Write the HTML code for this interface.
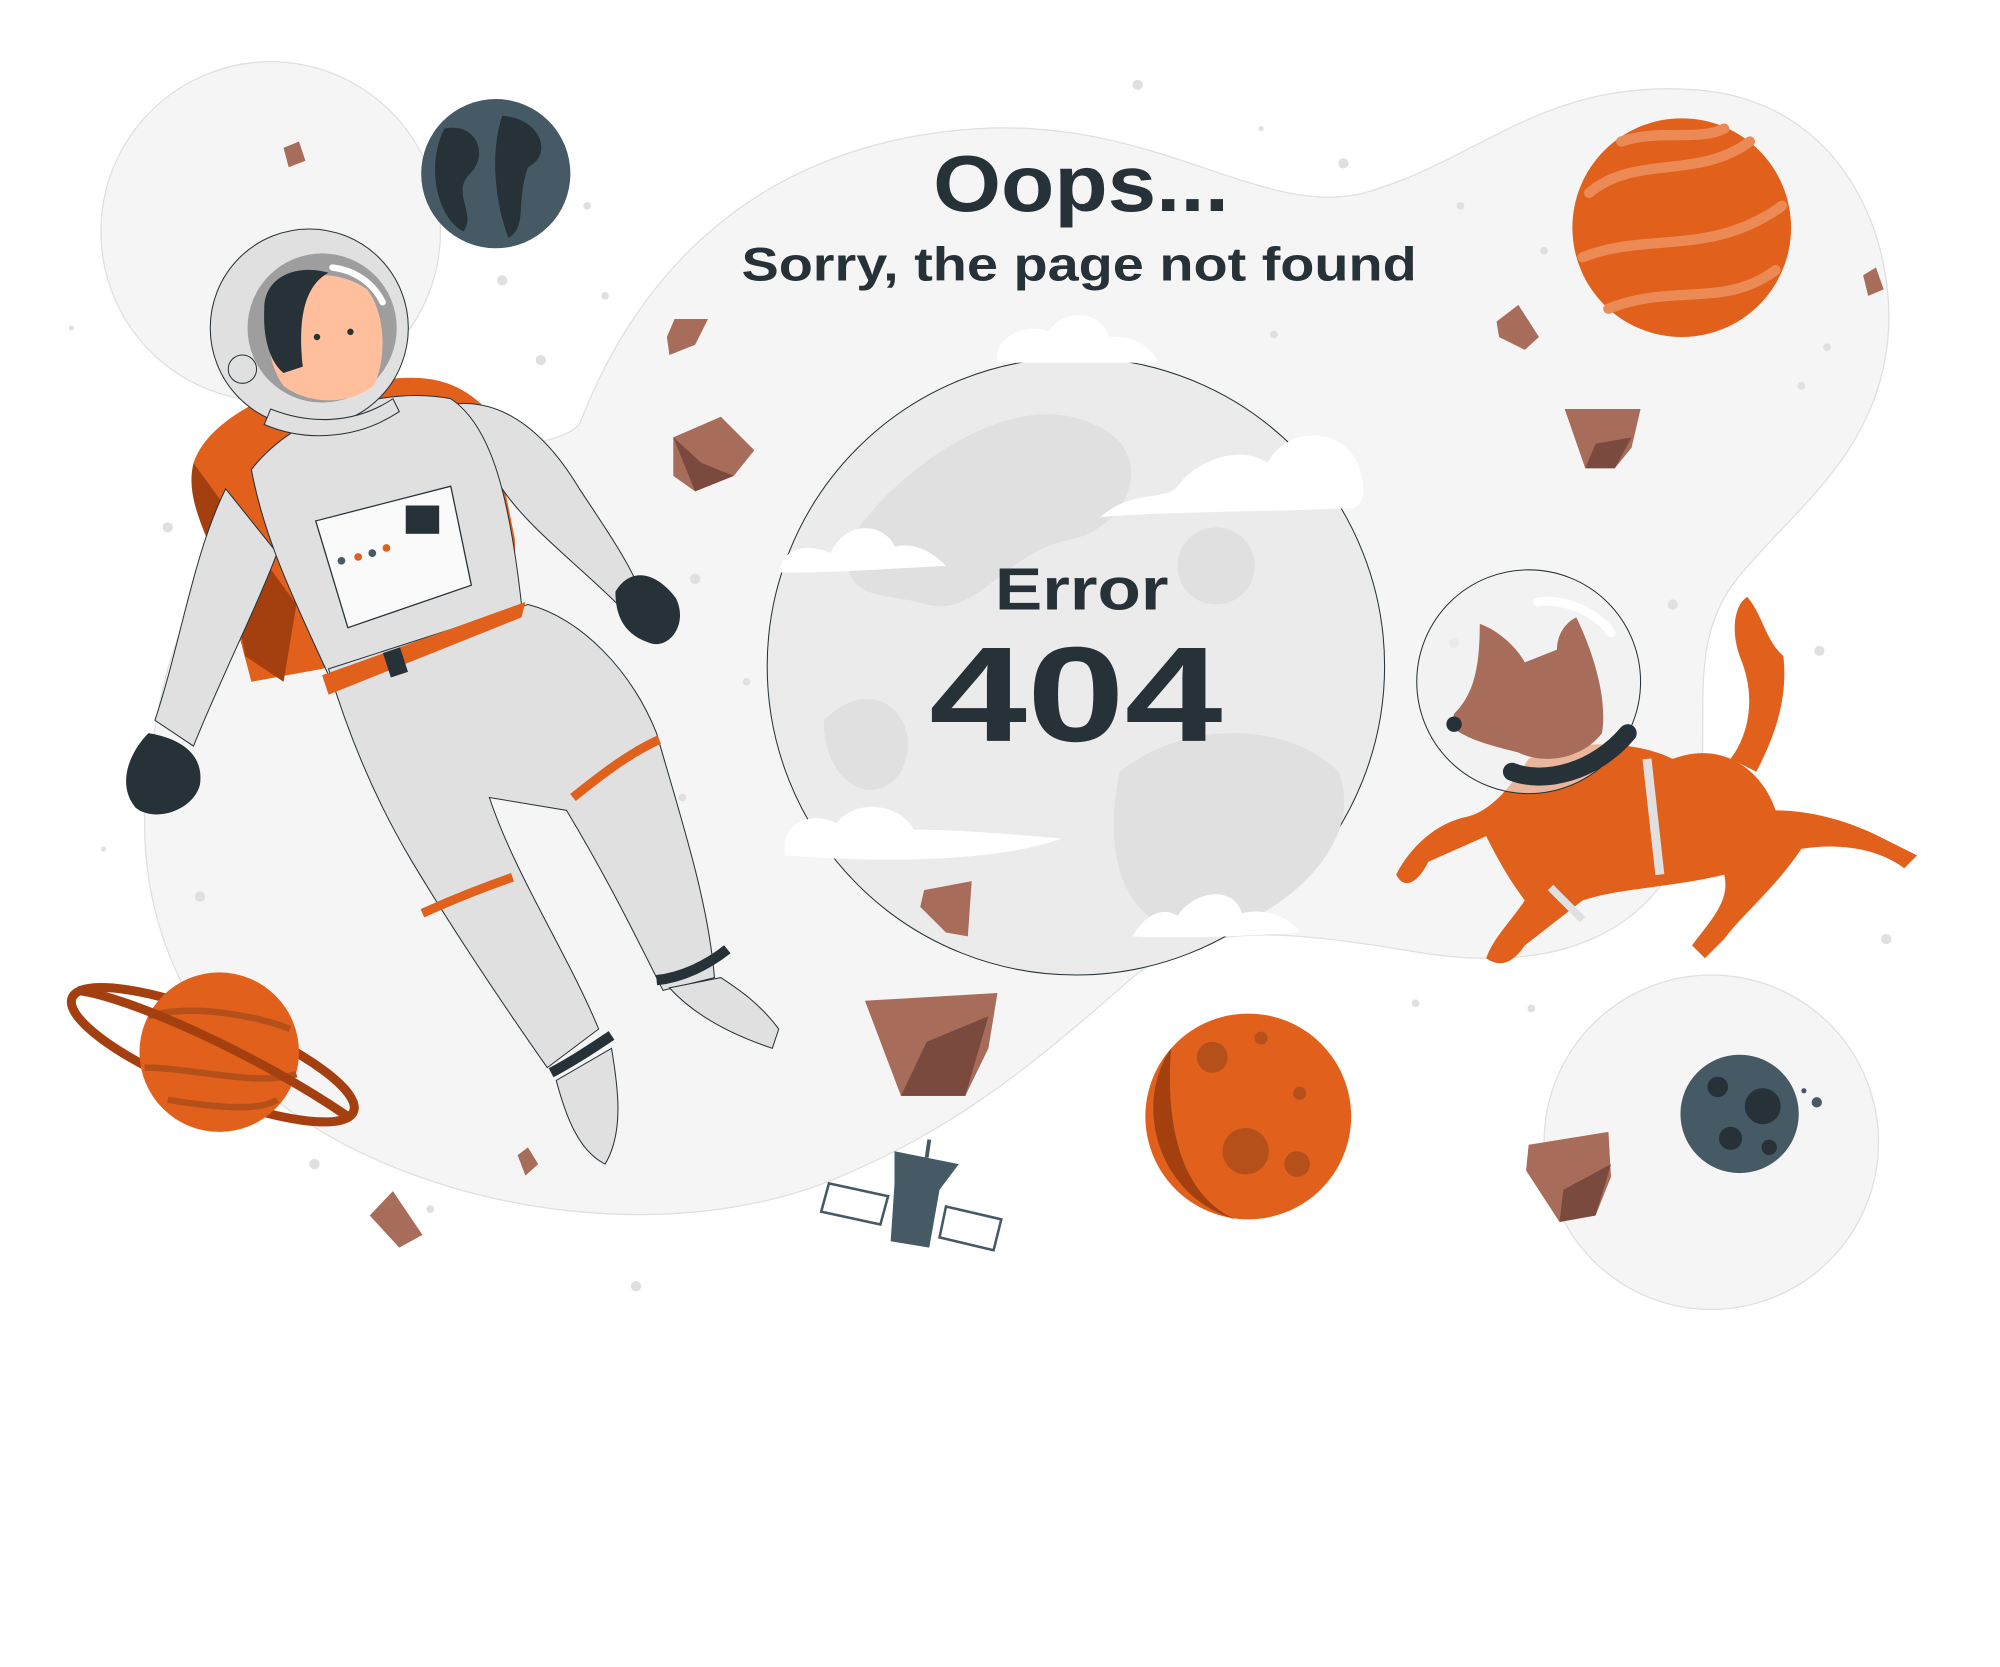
<!DOCTYPE html>
<html><head><meta charset="utf-8">
<style>
html,body{margin:0;padding:0;background:#fff;width:2000px;height:1667px;overflow:hidden}
svg{display:block}
text{font-family:"Liberation Sans",sans-serif;font-weight:bold;fill:#263238}
</style></head><body>
<svg width="2000" height="1667" viewBox="0 0 1554 1296" xmlns="http://www.w3.org/2000/svg">
<rect width="1554" height="1296" fill="#fff"/>
<circle cx="210" cy="180" r="132" fill="#f5f5f5" stroke="#e0e0e0" stroke-width="1"/>
<circle cx="1330" cy="888" r="130" fill="#f5f5f5" stroke="#e0e0e0" stroke-width="1"/>
<path d="M450 330 C500 200 600 110 760 100 C900 92 980 170 1060 150 C1150 125 1200 60 1320 70 C1440 80 1480 200 1465 280 C1450 360 1390 400 1350 450 C1310 500 1330 560 1320 620 C1300 720 1220 760 1100 740 C980 720 930 720 880 760 C800 830 740 880 640 920 C520 965 360 945 250 880 C140 815 100 700 115 600 C130 480 160 420 260 370 C340 330 420 360 450 330 Z" fill="#f5f5f5" stroke="#e0e0e0" stroke-width="1"/>
<g fill="#e0e0e0">
<circle cx="884" cy="66" r="4"/><circle cx="1044" cy="127" r="4"/><circle cx="456" cy="160" r="3"/><circle cx="390" cy="218" r="4"/><circle cx="130" cy="410" r="4"/><circle cx="155" cy="697" r="4"/><circle cx="244" cy="905" r="4"/><circle cx="494" cy="1000" r="4"/><circle cx="334" cy="940" r="3"/><circle cx="1466" cy="730" r="4"/><circle cx="1414" cy="506" r="4"/><circle cx="1190" cy="784" r="3"/><circle cx="1400" cy="300" r="3"/><circle cx="1420" cy="270" r="3"/><circle cx="1135" cy="160" r="3"/><circle cx="1200" cy="195" r="3"/><circle cx="540" cy="450" r="4"/><circle cx="530" cy="620" r="3"/><circle cx="580" cy="530" r="3"/><circle cx="1130" cy="500" r="4"/><circle cx="1300" cy="470" r="4"/><circle cx="1100" cy="780" r="3"/><circle cx="420" cy="280" r="4"/><circle cx="470" cy="230" r="3"/><circle cx="990" cy="260" r="3"/><circle cx="80" cy="660" r="2"/><circle cx="55" cy="255" r="2"/><circle cx="980" cy="100" r="2"/>
</g>
<circle cx="836" cy="518" r="240" fill="#ebebeb" stroke="#263238" stroke-width="0.8"/>
<g fill="#e0e0e0">
<path d="M660 420 C700 360 790 300 850 330 C900 350 880 410 830 420 C780 430 760 480 720 470 C690 460 650 470 660 420Z"/>
<path d="M870 600 C920 560 1000 560 1040 600 C1060 650 1010 700 960 720 C900 740 850 700 870 600Z"/>
<circle cx="945" cy="440" r="30"/>
<path d="M640 560 C680 520 720 560 700 600 C680 630 640 610 640 560Z"/>
</g>
<g fill="#fff">
<path d="M775 282 C770 262 800 250 815 258 C825 240 855 240 862 262 C880 260 895 270 900 282 Z"/>
<path d="M855 402 C880 380 905 390 915 378 C935 352 970 348 985 360 C1000 330 1050 330 1058 370 C1062 385 1058 395 1050 395 C980 398 900 398 855 402Z"/>
<path d="M605 445 C610 420 635 425 645 430 C660 400 690 410 695 425 C715 420 730 435 735 440 C690 442 640 446 605 445Z"/>
<path d="M610 665 C605 640 630 630 650 640 C665 620 700 625 710 645 C750 645 800 650 825 652 C780 668 700 672 610 665Z"/>
<path d="M880 728 C890 710 905 705 915 712 C930 690 960 690 965 710 C985 705 1005 715 1010 725 C960 728 920 730 880 728Z"/>
</g>
<text x="725" y="164" font-size="62" textLength="230" lengthAdjust="spacingAndGlyphs">Oops...</text>
<text x="576" y="218" font-size="37" textLength="525" lengthAdjust="spacingAndGlyphs">Sorry, the page not found</text>
<text x="773" y="474" font-size="46" textLength="135" lengthAdjust="spacingAndGlyphs">Error</text>
<text x="722" y="576" font-size="105" textLength="228" lengthAdjust="spacingAndGlyphs">404</text>
<circle cx="385" cy="135" r="58" fill="#455a64"/>
<path d="M345 100 C370 95 380 120 365 135 C350 150 370 165 360 180 C340 170 330 130 345 100Z M390 90 C420 92 430 120 410 130 C400 160 410 175 395 185 C385 160 380 120 390 90Z" fill="#263238"/>
<circle cx="1307" cy="177" r="85" fill="#e0601c"/>
<g fill="none" stroke="#ec8a55" stroke-width="8" stroke-linecap="round">
<path d="M1235 150 C1270 120 1320 140 1360 110"/>
<path d="M1230 200 C1280 180 1330 200 1385 160"/>
<path d="M1250 240 C1300 220 1340 240 1380 210"/>
<path d="M1260 110 C1290 100 1320 110 1340 100"/>
</g>
<circle cx="970" cy="868" r="80" fill="#e0601c"/>
<path d="M910 815 C880 860 900 930 960 948 C920 930 905 880 910 815Z" fill="#a4400f"/>
<g fill="#b5501a"><circle cx="968" cy="895" r="18"/><circle cx="942" cy="822" r="12"/><circle cx="1008" cy="905" r="10"/><circle cx="1010" cy="850" r="5"/><circle cx="980" cy="807" r="5"/></g>
<circle cx="1352" cy="866" r="46" fill="#455a64"/>
<g fill="#263238"><circle cx="1370" cy="860" r="14"/><circle cx="1335" cy="845" r="8"/><circle cx="1345" cy="885" r="9"/><circle cx="1375" cy="892" r="6"/></g>
<circle cx="1412" cy="857" r="4" fill="#455a64"/><circle cx="1402" cy="848" r="2" fill="#455a64"/>
<ellipse cx="165" cy="820" rx="118" ry="30" transform="rotate(22 165 820)" fill="none" stroke="#a4400f" stroke-width="7"/>
<circle cx="170" cy="818" r="62" fill="#e0601c"/>
<g fill="none" stroke="#b5501a" stroke-width="5"><path d="M115 790 C150 780 200 790 225 800"/><path d="M112 830 C150 830 200 845 230 835"/><path d="M130 855 C160 860 200 865 215 855"/></g>
<path d="M60 770 C100 775 200 820 270 868" fill="none" stroke="#a4400f" stroke-width="7"/>
<g>
<polygon points="523,340 560,324 586,350 570,370 540,382 523,370" fill="#a86c5a"/><polygon points="523,340 540,382 570,370 545,360" fill="#7a4a3e"/>
<polygon points="524,248 550,248 540,268 520,276 518,262" fill="#a86c5a"/>
<polygon points="1163,250 1180,237 1196,262 1185,272 1165,262" fill="#a86c5a"/>
<polygon points="1216,318 1275,318 1268,348 1255,364 1232,364" fill="#a86c5a"/><polygon points="1232,364 1255,364 1268,340 1240,345" fill="#7a4a3e"/>
<polygon points="672,778 775,772 768,815 750,852 700,852" fill="#a86c5a"/><polygon points="700,852 750,852 768,790 720,810" fill="#7a4a3e"/>
<polygon points="718,692 755,685 752,728 735,725 715,705" fill="#a86c5a"/>
<polygon points="1188,890 1250,880 1252,915 1240,945 1212,950 1186,910" fill="#a86c5a"/><polygon points="1212,950 1240,945 1252,905 1215,925" fill="#7a4a3e"/>
<polygon points="287,945 305,926 328,960 310,970" fill="#a86c5a"/>
<polygon points="220,115 232,110 237,125 224,130" fill="#a86c5a"/>
<polygon points="1448,214 1458,208 1464,225 1452,230" fill="#a86c5a"/>
<polygon points="402,898 410,892 418,905 408,914" fill="#a86c5a"/>
</g>
<g stroke="#455a64" stroke-width="2" fill="#fff">
<polygon points="644,920 690,930 684,952 638,942"/><polygon points="735,938 778,948 772,972 730,962"/>
</g>
<polygon points="695,895 745,905 730,925 722,970 692,965 695,920" fill="#455a64"/>
<line x1="722" y1="886" x2="720" y2="900" stroke="#455a64" stroke-width="3"/>
<g>
<path d="M150 360 C160 330 200 310 230 300 L300 295 C340 290 360 300 380 320 L400 420 L400 470 L250 520 L195 530 Z" fill="#e0601c"/>
<path d="M150 360 C140 400 180 440 190 510 L220 530 L230 470 Z" fill="#a4400f"/>
<path d="M330 320 C380 300 420 330 450 380 C470 410 490 440 495 455 L480 470 C450 440 410 410 390 380 Z" fill="#e0e0e0" stroke="#263238" stroke-width="0.8"/>
<path d="M175 380 C150 430 140 500 120 560 L150 580 C170 530 200 470 215 430 Z" fill="#e0e0e0" stroke="#263238" stroke-width="0.8"/>
<path d="M195 365 C230 320 300 300 350 310 C380 330 395 380 405 470 L255 525 C230 470 205 420 195 365Z" fill="#e0e0e0" stroke="#263238" stroke-width="0.8"/>
<path d="M245 405 L350 378 L366 455 L270 488 Z" fill="#fafafa" stroke="#263238" stroke-width="1"/>
<rect x="315" y="393" width="26" height="22" fill="#263238"/>
<g><circle cx="265" cy="436" r="3" fill="#455a64"/><circle cx="278" cy="433" r="3" fill="#e0601c"/><circle cx="289" cy="430" r="3" fill="#455a64"/><circle cx="300" cy="426" r="3" fill="#e0601c"/></g>
<path d="M255 520 L410 470 C450 480 490 520 510 570 C530 640 550 700 555 760 L515 770 C490 720 470 680 440 630 L380 620 C400 680 440 740 465 800 L425 830 C390 780 350 720 320 670 C290 620 270 570 255 520Z" fill="#e0e0e0" stroke="#263238" stroke-width="0.8"/>
<path d="M250 525 L408 468 L405 480 L255 540Z" fill="#e0601c"/>
<rect x="300" y="505" width="14" height="20" fill="#263238" transform="rotate(-18 307 515)"/>
<path d="M445 620 C470 600 490 585 512 575" stroke="#e0601c" stroke-width="7" fill="none"/>
<path d="M328 710 C350 700 375 690 398 682" stroke="#e0601c" stroke-width="7" fill="none"/>
<path d="M510 762 C530 760 550 750 565 738" stroke="#263238" stroke-width="8" fill="none"/>
<path d="M428 834 C445 825 460 815 475 805" stroke="#263238" stroke-width="8" fill="none"/>
<path d="M520 768 C540 790 570 805 600 815 L605 800 C590 780 575 770 560 760Z" fill="#e0e0e0" stroke="#263238" stroke-width="0.8"/>
<path d="M432 840 C440 870 450 895 470 905 C485 880 480 845 475 815Z" fill="#e0e0e0" stroke="#263238" stroke-width="0.8"/>
<path d="M478 460 C490 440 510 445 525 465 C535 485 520 505 505 500 C490 495 478 485 478 460Z" fill="#263238"/>
<path d="M115 570 C100 585 90 610 105 628 C120 640 150 630 155 610 C158 590 145 575 115 570Z" fill="#263238"/>
<circle cx="240" cy="255" r="77" fill="#e0e0e0" stroke="#263238" stroke-width="0.8"/>
<circle cx="250" cy="255" r="58" fill="#9e9e9e"/>
<path d="M215 225 C230 210 265 210 285 225 C300 245 300 280 290 300 C270 315 240 315 220 300 C205 280 205 245 215 225Z" fill="#ffbf9d"/>
<path d="M205 240 C205 215 230 205 255 212 C240 220 230 240 235 285 L220 290 C208 280 204 260 205 240Z" fill="#263238"/>
<circle cx="246" cy="262" r="2.5" fill="#263238"/><circle cx="272" cy="258" r="2.5" fill="#263238"/>
<circle cx="188" cy="287" r="11" fill="#e0e0e0" stroke="#263238" stroke-width="0.8"/>
<path d="M258 208 C275 210 290 220 297 235" stroke="#fff" stroke-width="5" fill="none" stroke-linecap="round"/>
<path d="M205 330 C240 345 280 340 310 320 L305 310 C275 330 240 330 210 318Z" fill="#e0e0e0" stroke="#263238" stroke-width="0.8"/>
</g>
<g>
<path d="M1188 590 C1220 575 1270 575 1300 590 C1340 575 1370 600 1380 630 C1410 630 1440 640 1460 650 L1490 665 L1480 675 C1460 660 1430 655 1400 660 C1380 690 1355 710 1340 730 L1325 745 L1315 735 C1330 715 1345 700 1340 680 C1300 690 1260 690 1230 700 L1185 735 C1175 750 1165 752 1155 745 C1160 730 1175 715 1185 700 C1170 680 1160 660 1155 650 L1110 670 C1100 690 1090 690 1085 680 C1095 660 1115 640 1140 635 C1160 630 1175 610 1188 590Z" fill="#e0601c"/>
<path d="M1345 590 C1360 570 1365 540 1352 510 C1345 490 1348 470 1358 464 C1370 478 1372 498 1386 510 C1390 545 1378 575 1365 600Z" fill="#e0601c"/>
<path d="M1280 590 L1290 680" stroke="#e0e0e0" stroke-width="7"/>
<path d="M1205 690 L1230 715" stroke="#e0e0e0" stroke-width="6"/>
<circle cx="1188" cy="530" r="87" fill="#f0f0f0" fill-opacity="0.6" stroke="#263238" stroke-width="0.8"/>
<path d="M1150 485 C1165 490 1180 505 1185 515 L1210 505 C1210 495 1215 485 1225 480 C1235 500 1250 540 1245 570 C1230 590 1200 595 1180 585 C1160 580 1140 575 1128 565 L1130 555 C1145 540 1150 520 1150 485Z" fill="#a86c5a"/>
<circle cx="1130" cy="563" r="6" fill="#263238"/>
<path d="M1175 600 C1200 610 1240 600 1265 570" stroke="#263238" stroke-width="14" fill="none" stroke-linecap="round"/>
<path d="M1195 468 C1215 465 1240 475 1252 492" stroke="#fff" stroke-width="7" fill="none" stroke-linecap="round"/>
</g>
</svg>
</body></html>
